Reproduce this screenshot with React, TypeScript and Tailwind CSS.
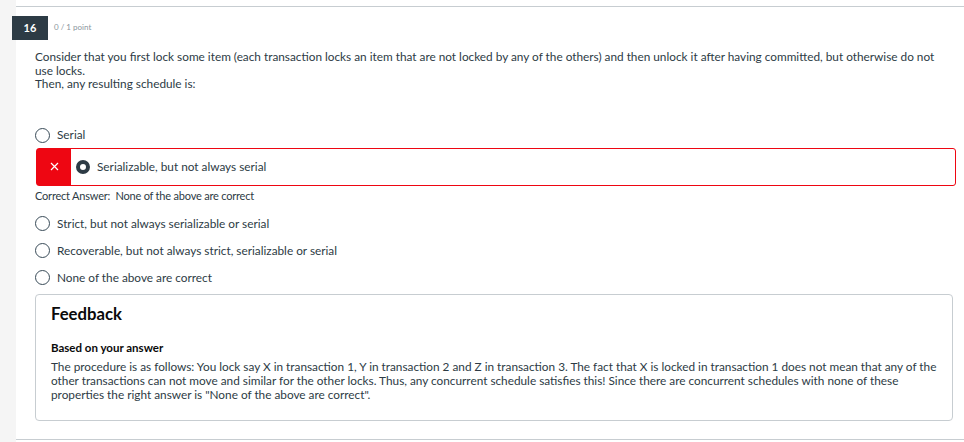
import React from "react";

function Radio({ checked = false }: { checked?: boolean }) {
  return checked ? (
    <span className="inline-block w-[14px] h-[14px] rounded-full border-[4px] border-[#2d3b45] bg-white shrink-0" />
  ) : (
    <span className="inline-block w-[15px] h-[15px] rounded-full border-[1.5px] border-[#394b58] bg-white shrink-0" />
  );
}

function Option({ label }: { label: string }) {
  return (
    <div className="flex items-center gap-[7px] h-[27px] pl-[19px]">
      <Radio />
      <span>{label}</span>
    </div>
  );
}

export default function App() {
  return (
    <div
      className="flex w-[964px] h-[442px] bg-white text-[#2d3b45] text-[11.8px] leading-[13.5px] overflow-hidden"
      style={{ fontFamily: "Lato, 'Noto Sans', sans-serif" }}
    >
      <div className="w-[16px] shrink-0 bg-[#f5f5f5]" />
      <div className="flex-1 flex flex-col">
        <div className="h-[6px]" />
        <div className="border-t border-[#c7cdd1]" />
        <div className="flex items-center mt-[9px] -ml-[4px] gap-[6px]">
          <div className="w-[36px] h-[24px] bg-[#2d3b45] text-white font-bold text-[11px] flex items-center justify-center">
            16
          </div>
          <span className="text-[8px] text-[#8b969e]">0 / 1 point</span>
        </div>
        <div className="pl-[19px] pr-[20px] mt-[10px]">
          <p>
            Consider that you first lock some item (each transaction locks an item that are not locked by any of the others) and then unlock it after having committed, but otherwise do not use locks.
          </p>
          <p>Then, any resulting schedule is:</p>
        </div>
        <div className="mt-[31px]">
          <Option label="Serial" />
        </div>
        <div className="ml-[20px] mr-[8px] -mt-[1px] h-[38px] border border-[#ee0612] rounded-[3px] flex items-center">
          <div className="w-[34px] h-[36px] bg-[#ee0612] text-white flex items-center justify-center">
            <svg width="9" height="9" viewBox="0 0 9 9" fill="none" stroke="white" strokeWidth="1.2">
              <path d="M1 1 L8 8 M8 1 L1 8" />
            </svg>
          </div>
          <div className="flex items-center gap-[7px] ml-[5px]">
            <Radio checked />
            <span>Serializable, but not always serial</span>
          </div>
        </div>
        <div className="pl-[19px] mt-[3px] text-[11px] tracking-[-0.2px]">
          Correct Answer:&nbsp;&nbsp;<span>None of the above are correct</span>
        </div>
        <div className="mt-[8px]">
          <Option label="Strict, but not always serializable or serial" />
          <Option label="Recoverable, but not always strict, serializable or serial" />
          <Option label="None of the above are correct" />
        </div>
        <div className="ml-[19px] mr-[11px] mt-[3px] h-[127px] border border-[#c7cdd1] rounded-[4px] px-[15px] pt-[9px]">
          <div className="text-[16.7px] font-bold text-[#0a0a0a] leading-[20px]">Feedback</div>
          <div className="mt-[17px] font-bold text-[11.5px] text-[#0a0a0a] leading-[14px]">Based on your answer</div>
          <p className="mt-[5px] leading-[14px]">
            The procedure is as follows: You lock say X in transaction 1, Y in transaction 2 and Z in transaction 3. The fact that X is locked in transaction 1 does not mean that any of the other transactions can not move and similar for the other locks. Thus, any concurrent schedule satisfies this! Since there are concurrent schedules with none of these properties the right answer is "None of the above are correct".
          </p>
        </div>
        <div className="mt-[18px] border-t border-[#c7cdd1]" />
      </div>
    </div>
  );
}
